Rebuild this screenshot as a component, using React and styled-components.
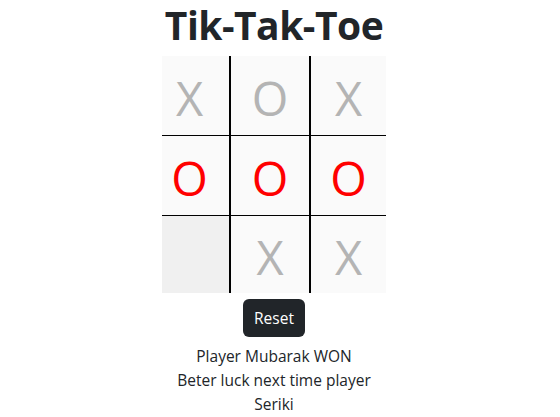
import styled, { createGlobalStyle } from 'styled-components'

const GlobalStyle = createGlobalStyle`
  body {
    margin: 0;
    background: #fff;
    color: #212529;
    font-family: "Open Sans", "Noto Sans", sans-serif;
    font-size: 16px;
    line-height: 1.5;
  }
`

const Page = styled.div`
  display: flex;
  flex-direction: column;
  align-items: center;
  padding-right: 12px;
`

const Title = styled.h1`
  margin: 0 0 8px 0;
  padding-top: 1px;
  font-size: 39px;
  font-weight: 700;
  line-height: 47px;
  letter-spacing: -0.5px;
  color: #212529;
`

const Board = styled.div`
  display: grid;
  grid-template-columns: 67px 78px 75px;
  grid-template-rows: 79px 79px 77px;
  column-gap: 2px;
  row-gap: 1px;
  background: #000;
`

const Cell = styled.div`
  display: flex;
  align-items: center;
  justify-content: center;
  padding-right: ${(p) => p.$shift}px;
  padding-top: 5px;
  background: ${(p) => (p.$empty ? '#f0f0f0' : '#fafafa')};
  color: ${(p) => (p.$win ? '#ff0000' : '#b4b4b4')};
  font-size: 47px;
  font-weight: 400;
  line-height: 1;
  cursor: pointer;
`

const ResetButton = styled.button`
  margin-top: 6px;
  padding: 6px 11px;
  border: none;
  border-radius: 6px;
  background: #212529;
  color: #fff;
  font-family: inherit;
  font-size: 15.5px;
  line-height: 26px;
  cursor: pointer;
`

const Message = styled.div`
  width: 224px;
  margin-top: 7px;
  text-align: center;
  font-size: 15.5px;
  line-height: 24px;
  color: #212529;
`

const cells = ['X', 'O', 'X', 'O', 'O', 'O', '', 'X', 'X']
const winLine = [3, 4, 5]

export default function App() {
  return (
    <Page>
      <GlobalStyle />
      <Title>Tik-Tak-Toe</Title>
      <Board>
        {cells.map((v, i) => (
          <Cell
            key={i}
            $empty={!v}
            $win={winLine.includes(i)}
            $shift={i % 3 === 0 ? 12 : 0}
          >
            {v}
          </Cell>
        ))}
      </Board>
      <ResetButton>Reset</ResetButton>
      <Message>
        <div>Player Mubarak WON</div>
        <div>Beter luck next time player Seriki</div>
      </Message>
    </Page>
  )
}
